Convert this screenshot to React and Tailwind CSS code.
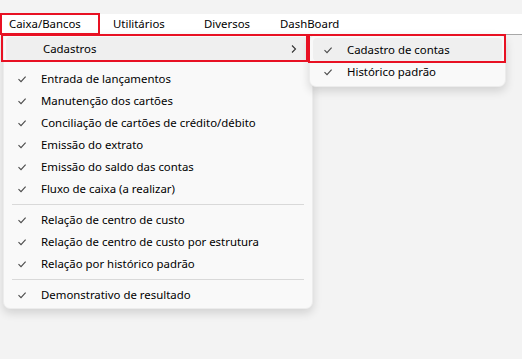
import React from "react";

const Check = () => (
  <svg width="10" height="10" viewBox="0 0 10 10" className="shrink-0">
    <path d="M1.5 5.2 L4 7.6 L8.6 2.6" fill="none" stroke="#4a4a4a" strokeWidth="1.1" />
  </svg>
);

const Item = ({ label }) => (
  <div className="flex h-[22px] items-center px-[13px]">
    <div className="w-[24px] flex items-center"><Check /></div>
    <span>{label}</span>
  </div>
);

const Sep = () => <div className="mx-[8px] my-[4px] h-px bg-[#d9d9d9]" />;

export default function App() {
  return (
    <div
      className="relative w-[522px] h-[359px] bg-[#f3f3f3] text-[11.4px] text-black overflow-hidden"
      style={{ fontFamily: '"Segoe UI", "Noto Sans", "Open Sans", sans-serif' }}
    >
      <div className="h-[14px]" />
      <div className="flex h-[20px] items-center bg-white">
        <span className="ml-[9px] w-[104px]">Caixa/Bancos</span>
        <span className="w-[91px]">Utilitários</span>
        <span className="w-[76px]">Diversos</span>
        <span>DashBoard</span>
      </div>
      <div className="h-px bg-[#a8a8a8] ml-[300px]" />

      {/* main dropdown */}
      <div className="absolute left-[3px] top-[34px] w-[310px] rounded-b-[7px] bg-[#f9f9f9] pt-[2px] pb-[2px] shadow-[0_4px_10px_rgba(0,0,0,0.14)] border border-[#ececec]">
        <div className="mx-[2px] flex h-[24px] items-center rounded-[4px] bg-[#efefef] pl-[37px] pr-[12px]">
          <span className="flex-1">Cadastros</span>
          <svg width="8" height="10" viewBox="0 0 8 10">
            <path d="M2 1.5 L5.5 5 L2 8.5" fill="none" stroke="#333" strokeWidth="1.1" />
          </svg>
        </div>
        <div className="h-[7px]" />
        <Item label="Entrada de lançamentos" />
        <Item label="Manutenção dos cartões" />
        <Item label="Conciliação de cartões de crédito/débito" />
        <Item label="Emissão do extrato" />
        <Item label="Emissão do saldo das contas" />
        <Item label="Fluxo de caixa (a realizar)" />
        <Sep />
        <Item label="Relação de centro de custo" />
        <Item label="Relação de centro de custo por estrutura" />
        <Item label="Relação por histórico padrão" />
        <Sep />
        <Item label="Demonstrativo de resultado" />
      </div>

      {/* submenu */}
      <div className="absolute left-[309px] top-[34px] w-[197px] rounded-[7px] bg-[#f9f9f9] pt-[3px] pb-[3px] shadow-[0_4px_10px_rgba(0,0,0,0.14)] border border-[#ececec]">
        <div className="mx-[3px] flex h-[23px] items-center rounded-[4px] bg-[#efefef] pl-[10px]">
          <div className="w-[24px] flex items-center"><Check /></div>
          <span>Cadastro de contas</span>
        </div>
        <div className="flex h-[22px] items-center pl-[13px]">
          <div className="w-[24px] flex items-center"><Check /></div>
          <span>Histórico padrão</span>
        </div>
      </div>

      {/* red annotation boxes */}
      <div className="absolute left-0 top-[13px] w-[100px] h-[22px] border-2 border-[#e81123]" />
      <div className="absolute left-[1px] top-[34px] w-[307px] h-[28px] border-2 border-[#e81123]" />
      <div className="absolute left-[308px] top-[34px] w-[198px] h-[29px] border-2 border-[#e81123]" />
    </div>
  );
}
